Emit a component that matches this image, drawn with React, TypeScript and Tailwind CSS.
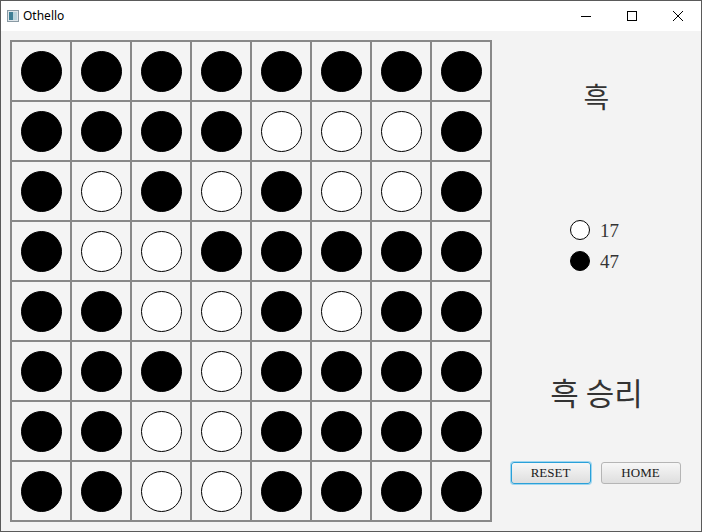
const BOARD = [
  "BBBBBBBB",
  "BBBBWWWB",
  "BWBWBWWB",
  "BWWBBBBB",
  "BBWWBWBB",
  "BBBWBBBB",
  "BBWWBBBB",
  "BBWWBBBB",
];

function Piece({ color, size }: { color: string; size: string }) {
  return (
    <div
      className={`${size} rounded-full border border-black ${
        color === "B" ? "bg-black" : "bg-white"
      }`}
    />
  );
}

export default function App() {
  return (
    <div className="w-[702px] h-[532px] border border-[#5a5a5a] bg-[#f3f3f3] flex flex-col overflow-hidden">
      {/* title bar */}
      <div className="h-[30px] bg-white flex items-center shrink-0">
        <svg width="12" height="12" viewBox="0 0 12 12" className="ml-[6px]">
          <rect x="0.5" y="0.5" width="11" height="11" fill="#dfe6ea" stroke="#8a9aa4" />
          <rect x="2" y="2" width="4" height="8" fill="#3f7f95" />
          <rect x="6" y="2" width="4" height="8" fill="#b9d3db" />
        </svg>
        <span className="ml-[4px] text-[12px] text-black font-['Noto_Sans',sans-serif]">
          Othello
        </span>
        <div className="ml-auto flex items-center h-full">
          <div className="w-[46px] h-full flex items-center justify-center">
            <div className="w-[10px] h-px bg-black" />
          </div>
          <div className="w-[46px] h-full flex items-center justify-center">
            <div className="w-[10px] h-[10px] border border-black" />
          </div>
          <div className="w-[46px] h-full flex items-center justify-center">
            <svg width="10" height="10" viewBox="0 0 10 10">
              <path d="M0 0L10 10M10 0L0 10" stroke="black" strokeWidth="1" />
            </svg>
          </div>
        </div>
      </div>

      {/* content */}
      <div className="flex flex-1">
        <div className="pl-[9px] pt-[9px]">
          <div className="grid grid-cols-8 gap-[2px] p-[2px] bg-[#888888] w-[482px]">
            {BOARD.flatMap((row, r) =>
              row.split("").map((c, i) => (
                <div
                  key={`${r}-${i}`}
                  className="h-[58px] bg-[#f4f4f4] flex items-center justify-center"
                >
                  <Piece color={c} size="w-[41px] h-[41px]" />
                </div>
              ))
            )}
          </div>
        </div>

        <div className="flex-1 flex flex-col items-center">
          <div className="mt-[44px] text-[28px] text-[#333] font-['Noto_Sans_CJK_KR',sans-serif]">
            흑
          </div>

          <div className="mt-[101px] flex flex-col gap-[8px] -ml-[4px] font-['Liberation_Serif',serif] text-[19px] text-[#333]">
            <div className="flex items-center gap-[10px]">
              <Piece color="W" size="w-[20px] h-[20px]" />
              <span className="leading-[20px] mt-[3px]">17</span>
            </div>
            <div className="flex items-center gap-[10px]">
              <Piece color="B" size="w-[20px] h-[20px]" />
              <span className="leading-[20px] mt-[3px]">47</span>
            </div>
          </div>

          <div className="mt-[97px] text-[31px] text-[#333] font-['Noto_Sans_CJK_KR',sans-serif]">
            흑 승리
          </div>

          <div className="mt-[46px] -ml-[2px] flex gap-[10px] font-['Liberation_Serif',serif] text-[13px] text-[#1a1a1a]">
            <button className="w-[80px] h-[22px] rounded-[3px] border border-[#2aa0d8] bg-gradient-to-b from-[#f7f7f7] to-[#dedede] shadow-[0_0_0_1px_#9ed6f0]">
              RESET
            </button>
            <button className="w-[80px] h-[22px] rounded-[3px] border border-[#b5b5b5] bg-gradient-to-b from-[#f7f7f7] to-[#dedede]">
              HOME
            </button>
          </div>
        </div>
      </div>
    </div>
  );
}
